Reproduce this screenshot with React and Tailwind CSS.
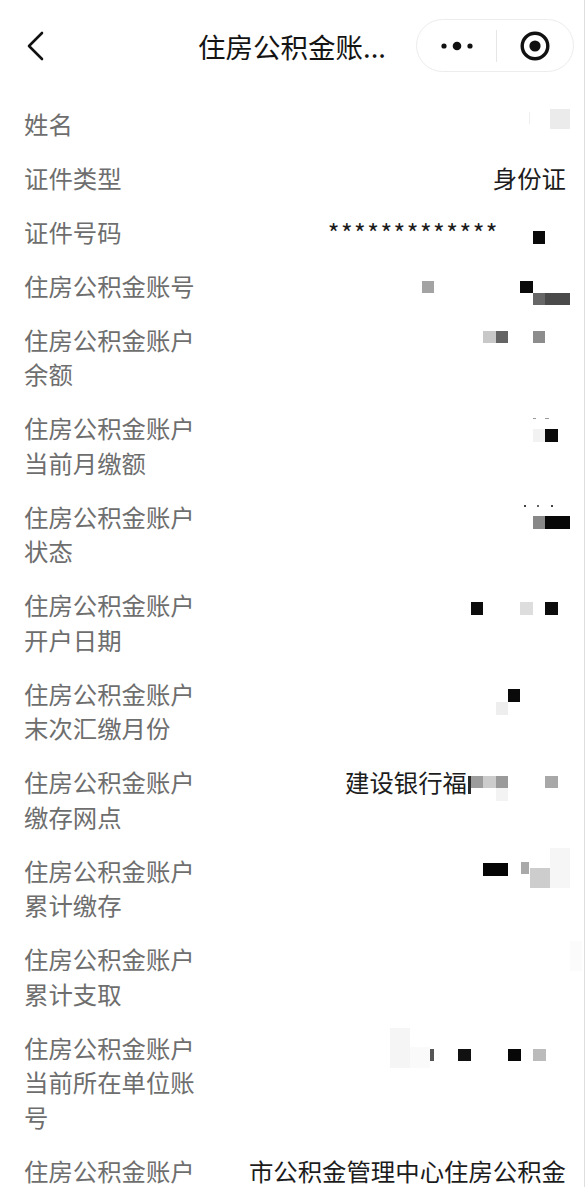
import React from 'react';

const rows = [
  { label: '姓名', blocks: [[529, 15, 1, 12, '#eeeeee'], [550, 12, 20, 20, '#ebebeb']] },
  { label: '证件类型', value: '身份证' },
  { label: '证件号码', value: '*************', pad: 67, stars: true, blocks: [[533, 26, 12, 13, '#0a0a0a']] },
  {
    label: '住房公积金账号',
    blocks: [
      [422, 22, 12, 12, '#a3a3a3'],
      [520, 22, 13, 12, '#0a0a0a'],
      [533, 34, 12, 12, '#676767'],
      [545, 34, 25, 12, '#4a4a4a'],
    ],
  },
  {
    label: '住房公积金账户余额',
    blocks: [
      [483, 18, 13, 12, '#c8c8c8'],
      [496, 18, 12, 12, '#646464'],
      [533, 18, 12, 12, '#8c8c8c'],
    ],
  },
  {
    label: '住房公积金账户当前月缴额',
    blocks: [
      [533, 16, 3, 1, '#9a9a9a'],
      [545, 16, 4, 1, '#9a9a9a'],
      [533, 27, 12, 13, '#f2f2f2'],
      [545, 27, 13, 13, '#0a0a0a'],
    ],
  },
  {
    label: '住房公积金账户状态',
    blocks: [
      [524, 15, 2, 2, '#444444'],
      [537, 15, 2, 2, '#666666'],
      [551, 15, 2, 2, '#444444'],
      [533, 26, 12, 13, '#888888'],
      [545, 26, 25, 13, '#080808'],
    ],
  },
  {
    label: '住房公积金账户开户日期',
    blocks: [
      [471, 23, 12, 13, '#0c0c0c'],
      [520, 23, 13, 13, '#dddddd'],
      [545, 23, 13, 13, '#0c0c0c'],
    ],
  },
  {
    label: '住房公积金账户末次汇缴月份',
    blocks: [
      [508, 22, 12, 13, '#0a0a0a'],
      [496, 35, 12, 13, '#eeeeee'],
    ],
  },
  {
    label: '住房公积金账户缴存网点',
    value: '建设银行福',
    pad: 99,
    blocks: [
      [468, 20, 3, 18, '#2a2a2a'],
      [471, 20, 12, 12, '#9c9c9c'],
      [483, 20, 13, 12, '#cccccc'],
      [496, 20, 12, 12, '#9a9a9a'],
      [496, 32, 12, 13, '#f3f3f3'],
      [545, 20, 13, 12, '#a8a8a8'],
    ],
  },
  {
    label: '住房公积金账户累计缴存',
    blocks: [
      [550, 4, 20, 40, '#f6f6f6'],
      [483, 19, 25, 13, '#050505'],
      [521, 18, 8, 12, '#a9a9a9'],
      [530, 24, 20, 20, '#cdcdcd'],
    ],
  },
  { label: '住房公积金账户累计支取', blocks: [[570, 8, 12, 30, '#fbfbfb']] },
  {
    label: '住房公积金账户当前所在单位账号',
    blocks: [
      [390, 7, 20, 40, '#f5f5f5'],
      [410, 26, 20, 21, '#fafafa'],
      [430, 28, 4, 12, '#555555'],
      [458, 28, 13, 12, '#111111'],
      [508, 28, 13, 12, '#070707'],
      [533, 28, 13, 12, '#bbbbbb'],
    ],
  },
  { label: '住房公积金账户缴存单位名称', value: '市公积金管理中心住房公积金专户' },
];

const BackIcon = () => (
  <svg width="20" height="30" viewBox="0 0 20 30" fill="none">
    <path d="M16 2 L3 15 L16 28" stroke="#111" strokeWidth="2.6" strokeLinecap="round" strokeLinejoin="round" />
  </svg>
);

const MoreIcon = () => (
  <svg width="34" height="12" viewBox="0 0 34 12">
    <circle cx="4" cy="6" r="2.6" fill="#111" />
    <circle cx="17" cy="6" r="4.3" fill="#111" />
    <circle cx="30" cy="6" r="2.6" fill="#111" />
  </svg>
);

const TargetIcon = () => (
  <svg width="32" height="32" viewBox="0 0 32 32">
    <circle cx="16" cy="16" r="12.8" fill="none" stroke="#111" strokeWidth="3.4" />
    <circle cx="16" cy="16" r="5.6" fill="#111" />
  </svg>
);

export default function App() {
  return (
    <div
      className="min-h-[1187px] w-[585px] overflow-hidden bg-white border-r border-[#dedede]"
      style={{ fontFamily: '"Noto Sans CJK SC", "Noto Sans", sans-serif' }}
    >
      {/* Nav bar */}
      <div className="grid h-[97px] grid-cols-[1fr_auto_1fr] items-start pt-[19px]">
        <div className="flex h-[53px] items-center pl-[26px]">
          <BackIcon />
        </div>
        <div className="flex h-[53px] items-center text-[27.5px] leading-none text-[#141414] pt-[3px]">
          住房公积金账...
        </div>
        <div className="flex justify-end pr-[10px]">
          <div className="flex h-[53px] w-[158px] items-center rounded-full border border-[#ececec] bg-white">
            <div className="flex flex-1 justify-center pl-[2px]">
              <MoreIcon />
            </div>
            <div className="h-[32px] w-px bg-[#e6e6e6]" />
            <div className="flex flex-1 justify-center">
              <TargetIcon />
            </div>
          </div>
        </div>
      </div>

      {/* Detail rows */}
      <div>
        {rows.map((row, i) => (
          <div key={i} className="relative flex py-[9.75px] text-[24.4px] leading-[34.5px]">
            <div className="ml-[24px] w-[172px] shrink-0 break-all text-[#6e6e6e]">{row.label}</div>
            <div
              className={
                row.stars
                  ? 'ml-[52px] mr-[18px] flex-1 text-right text-[25px] tracking-[1.5px] text-[#1c1c1c]'
                  : 'ml-[52px] mr-[18px] flex-1 text-right text-[#1c1c1c]'
              }
              style={{ paddingRight: row.pad || 0 }}
            >
              {row.value}
            </div>
            {row.blocks &&
              row.blocks.map(([x, y, w, h, c], j) => (
                <span
                  key={j}
                  className="absolute"
                  style={{ left: x, top: y, width: w, height: h, backgroundColor: c }}
                />
              ))}
          </div>
        ))}
      </div>
    </div>
  );
}
